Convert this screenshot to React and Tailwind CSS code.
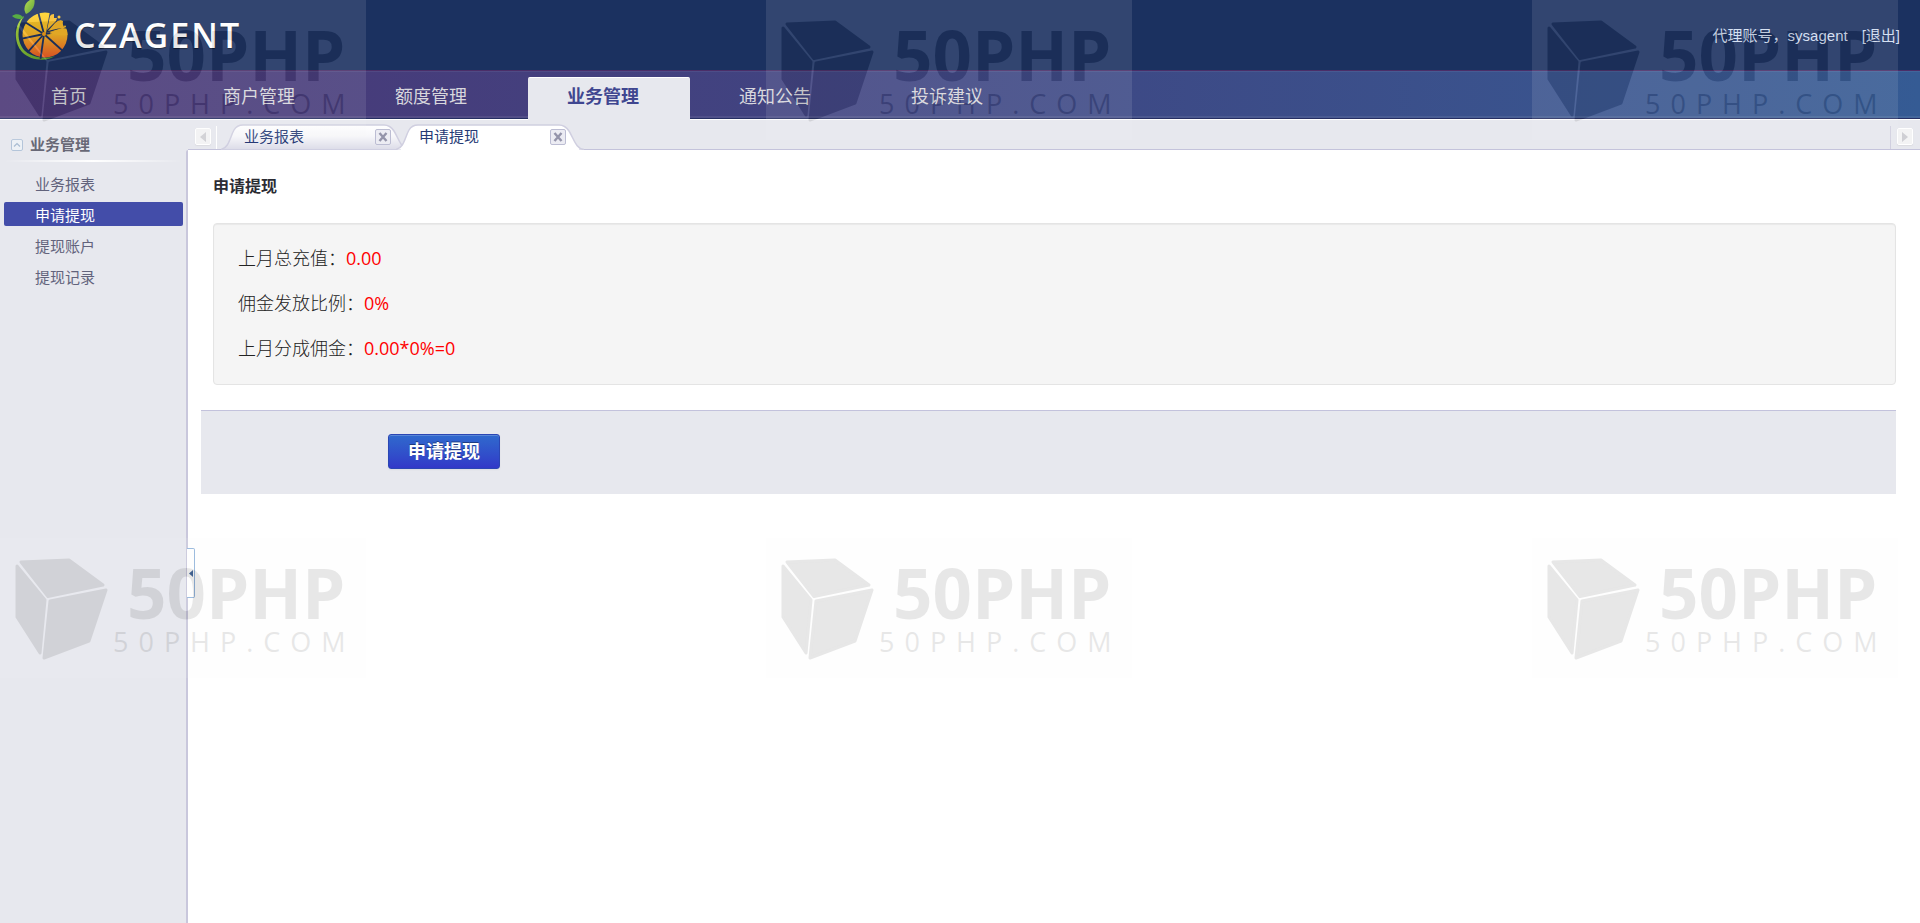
const NAV = ["首页", "商户管理", "额度管理", "业务管理", "通知公告", "投诉建议"];
const MENU = ["业务报表", "申请提现", "提现账户", "提现记录"];
const FIGURES = [
  ["上月总充值：", "0.00"],
  ["佣金发放比例：", "0%"],
  ["上月分成佣金：", "0.00*0%=0"],
];

function OrangeLogo() {
  const spokes = [8, 42, 78, 122, 165, 262, 312];
  return (
    <svg className="h-15 w-14 shrink-0" viewBox="0 0 56 60" aria-hidden="true">
      <defs>
        <linearGradient id="fruit" x1="0" y1="0" x2="0" y2="1">
          <stop offset="0" stopColor="#ffd42a" />
          <stop offset="0.5" stopColor="#f5b324" />
          <stop offset="1" stopColor="#ee5a24" />
        </linearGradient>
        <linearGradient id="leaf" x1="0" y1="0" x2="1" y2="1">
          <stop offset="0" stopColor="#b5dc3c" />
          <stop offset="1" stopColor="#4c9a2a" />
        </linearGradient>
      </defs>
      <path d="M12 16C2 24 1 42 10 52C20 62 36 61 43 56C34 59 21 58 13 51C4 42 5 27 12 16Z" fill="url(#leaf)" />
      <circle cx="33" cy="35" r="22.500" fill="url(#fruit)" />
      <g stroke="#1b3160" strokeWidth="1.800">
        {spokes.map((a) => (
          <line key={a} x1="32" y1="34" x2="32" y2="59" transform={`rotate(${a} 32 34)`} />
        ))}
      </g>
      <path d="M34 33L38 11L58 11L58 29L50 28Z" fill="#1b3160" />
      <path d="M35 30L38 16Q39 14 42 14L42 18L45 18L44 21Z" fill="#fbc02d" />
      <path d="M36 31L43 23Q47 19 51 21Q50 25 53 28Q46 28 36 31Z" fill="#f9b827" />
      <circle cx="47" cy="17" r="1.500" fill="#fbc02d" />
      <circle cx="53" cy="26.500" r="1" fill="#fbc02d" />
      <path d="M38 32.500Q46 28.500 55 30L55.500 35Q46 36 38 33.500Z" fill="#f9b827" />
      <circle cx="32" cy="34" r="2" fill="#f39c12" />
      <path d="M14 14C10 7 14 1 22 -2C24 4 21 11 14 14Z" fill="url(#leaf)" />
      <path d="M12 18C8 20 3 19 0 16C4 13 9 14 12 18Z" fill="#45a52e" />
    </svg>
  );
}

function BrandMark() {
  return (
    <svg className="h-[140px] w-[366px] opacity-10" viewBox="0 0 366 140">
      <rect width="366" height="140" fill="#f8f8f8" />
      <g fill="#1c1c1c">
        <g stroke="#1c1c1c" strokeWidth="3" strokeLinejoin="round">
          <path d="M21 24L69 22L103 47L48 58.500Z" />
          <path d="M17 28L45 62L40 115L17 79Z" />
          <path d="M50 63L106 52L89 103L44 120Z" />
        </g>
        <text x="127" y="81" className="font-['Open_Sans'] text-[69px] font-bold">50PHP</text>
        <text x="113" y="114" className="font-['Open_Sans'] text-[27px] tracking-[10px]">50PHP.COM</text>
      </g>
    </svg>
  );
}

function DocTab({ label, active }) {
  return (
    <div className={`relative flex h-[26px] w-[188px] shrink-0 items-center ${active ? "z-10 -ml-[13px]" : ""}`}>
      <svg className="absolute inset-0 h-full w-full" viewBox="0 0 188 26" aria-hidden="true">
        <defs>
          <linearGradient id="tabfill" x1="0" y1="0" x2="0" y2="1">
            <stop offset="0" stopColor="#ffffff" />
            <stop offset="0.45" stopColor="#f7f7fa" />
            <stop offset="1" stopColor="#dcdce8" />
          </linearGradient>
        </defs>
        <path
          d="M0 25.500C8 24 9 13 13 6Q16 1 22 1H163Q169 1 173 7C178 15 180 25 188 25.500"
          fill={active ? "#fff" : "url(#tabfill)"}
          stroke="#d0cfe0"
          strokeWidth="1.500"
        />
        {active && <rect x="5" y="25" width="178" height="1" fill="#fff" />}
      </svg>
      <a href="#tab" className="relative ml-[23px] w-[131px] text-[15px] leading-5 text-[#263a75]">{label}</a>
      <button aria-label={`关闭${label}`} className="relative flex h-4 w-4 items-center justify-center rounded-xs border border-[#bcbdd3] bg-[#ececf3]">
        <svg className="h-2.5 w-2.5" viewBox="0 0 10 10" aria-hidden="true">
          <path d="M1.500 1L8.500 9M8.500 1L1.500 9" stroke="#9494aa" strokeWidth="2.400" />
        </svg>
      </button>
    </div>
  );
}

function ScrollButton({ label, path }) {
  return (
    <button aria-label={label} className="flex h-[17px] w-4 shrink-0 items-center justify-center rounded-xs border border-white bg-[#f3f3f4] shadow-[0_1px_1px_#dcdce0]">
      <svg className="h-2.5 w-1.5" viewBox="0 0 6 10" aria-hidden="true">
        <path d={path} fill="#cfcfd4" />
      </svg>
    </button>
  );
}

export default function App() {
  return (
    <div className="relative flex min-h-screen flex-col overflow-hidden bg-[#e7e8ee] font-['Liberation_Sans','Noto_Sans_CJK_SC',sans-serif]">
      <header className="flex h-[70px] items-start justify-between bg-[#1b3160] pr-5 pl-3">
        <a href="#home" className="flex items-start">
          <OrangeLogo />
          <span className="mt-[10px] ml-1.5 font-['Open_Sans'] text-[34px] leading-[50px] font-semibold tracking-[2px] text-white [text-shadow:0_1px_1px_#0008]">CZAGENT</span>
        </a>
        <div className="mt-[26px] flex gap-3.5 text-[15px] leading-5 text-[#d3dff2]">
          <span>代理账号，sysagent</span>
          <a href="#logout">[退出]</a>
        </div>
      </header>

      <nav className="flex h-[50px] items-end gap-2.5 border-t border-b border-t-[#4b2e68] border-b-white bg-linear-to-r from-[#4a3676] via-[#3e4683] to-[#355b94] pl-3 shadow-[inset_0_-1px_0_#262f63,inset_0_-3px_0_#ffffff14,inset_0_1px_0_#ffffff10]">
        {NAV.map((name) =>
          name === "业务管理" ? (
            <a key={name} href="#nav" className="relative -mb-px flex h-[43px] w-[162px] items-start rounded-t-xs border-t border-[#fff] bg-[#e7e8ee] pt-[5px] pl-[39px] text-lg leading-7 font-bold text-[#3f4690]">
              {name}
            </a>
          ) : (
            <a key={name} href="#nav" className="flex h-[43px] w-[162px] items-start pt-[7px] pl-[39px] text-lg leading-7 text-[#d8d7dd]">
              {name}
            </a>
          ),
        )}
      </nav>

      <div className="flex flex-1">
        <aside className="w-[186px] shrink-0 px-1 pt-3.5">
          <button className="flex h-[22px] items-center gap-[7px] pl-[7px] text-[15px] leading-[22px] font-bold text-[#686876]">
            <svg className="h-3 w-3" viewBox="0 0 12 12" fill="none" aria-hidden="true">
              <rect x="0.500" y="0.500" width="11" height="11" rx="1.500" fill="#edf1f6" stroke="#b4c5da" />
              <path d="M3 7.500L6 4.500L9 7.500" stroke="#a9bcd2" strokeWidth="1.200" />
            </svg>
            业务管理
          </button>
          <div className="mt-1 h-0.5 bg-linear-to-r from-transparent via-white to-transparent" />
          <ul className="mt-[9px] flex flex-col gap-[7px]">
            {MENU.map((name) => (
              <li key={name}>
                <a
                  href="#menu"
                  className={`block h-6 w-[179px] rounded-xs pt-[3px] pl-[31px] text-[15px] leading-[21px] ${
                    name === "申请提现" ? "bg-[#434da9] text-white" : "text-[#62637c]"
                  }`}
                >
                  {name}
                </a>
              </li>
            ))}
          </ul>
        </aside>

        <div className="flex min-w-0 flex-1 flex-col">
          <div className="ml-0.5 flex h-[30px] items-end border-b border-[#c4c3db]">
            <div className="flex h-full items-center pt-2 pb-1 pl-[7px]">
              <ScrollButton label="向左滚动" path="M6 0V10L0 5Z" />
            </div>
            <div className="mr-1 ml-[5px] h-[23px] w-px bg-white" />
            <div className="-mb-px flex flex-1">
              <DocTab label="业务报表" />
              <DocTab label="申请提现" active />
            </div>
            <div className="h-[23px] w-px bg-[#d0cfdf]" />
            <div className="flex h-full items-center pt-2 pr-[7px] pb-1 pl-1.5">
              <ScrollButton label="向右滚动" path="M0 0L6 5L0 10Z" />
            </div>
          </div>

          <main className="relative flex-1 rounded-tl-xs border-l-2 border-[#c9c7dc] bg-white pt-[25px] pr-6 pl-[13px]">
            <h1 className="ml-3 text-base leading-6 font-bold text-[#2c2c34]">申请提现</h1>
            <section className="mt-6 ml-3 rounded border border-[#e4e4e4] bg-[#f5f5f5] pt-3 pb-[13px] pl-6 shadow-[inset_0_1px_1px_#0000000d]">
              {FIGURES.map(([label, value]) => (
                <p key={label} className="flex h-[45px] items-baseline text-lg leading-[45px] text-[#222]">
                  <span className="font-light">{label}</span>
                  <span className="font-['Open_Sans'] text-[#f00]">{value}</span>
                </p>
              ))}
            </section>
            <div className="mt-[25px] border-t border-[#c3c2dc] bg-[#e7e8ee] pt-[23px] pb-[25px] pl-[187px]">
              <button className="flex h-[35px] w-28 items-center justify-center rounded-[3px] border border-[#2b46b4] bg-linear-to-b from-[#3069cd] to-[#3238c8] text-lg leading-6 font-bold text-white shadow-[inset_0_1px_0_#ffffff33,0_1px_2px_#0000000d] [text-shadow:0_-1px_0_#00000066]">
                申请提现
              </button>
            </div>
            <button aria-label="收起菜单" className="absolute top-[398px] -left-px flex h-[50px] w-2 items-center justify-center rounded-r-xs border border-l-0 border-[#93b5dc] bg-white">
              <svg className="h-[7px] w-1" viewBox="0 0 4 7" aria-hidden="true">
                <path d="M4 0V7L0 3.500Z" fill="#45699c" />
              </svg>
            </button>
          </main>
        </div>
      </div>

      <div aria-hidden="true" className="pointer-events-none absolute inset-0 z-20 grid grid-cols-[366px_366px_366px] content-start gap-x-[400px] gap-y-[398px] overflow-hidden">
        {[0, 1, 2, 3, 4, 5].map((n) => (
          <BrandMark key={n} />
        ))}
      </div>
    </div>
  );
}
